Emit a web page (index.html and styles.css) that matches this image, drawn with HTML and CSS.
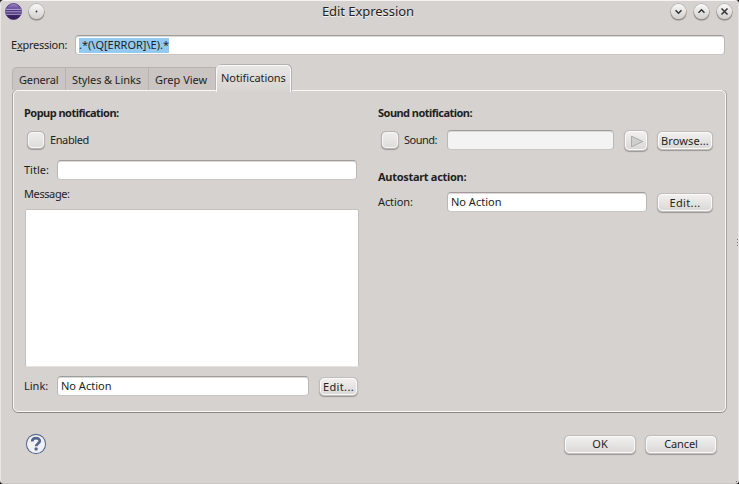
FILE: index.html
```html
<!DOCTYPE html>
<html lang="en">
<head>
<meta charset="utf-8">
<title>Edit Expression</title>
<link rel="stylesheet" href="styles.css">
</head>
<body>
<div class="window">
  <header class="titlebar">
    <svg class="logo" width="17" height="17" viewBox="0 0 16 16">
      <defs><linearGradient id="lg" x1="0" y1="0" x2="0" y2="1"><stop offset="0" stop-color="#a58cc8"/><stop offset=".45" stop-color="#4b3485"/><stop offset="1" stop-color="#2f1950"/></linearGradient></defs>
      <circle cx="8" cy="8" r="7.5" fill="url(#lg)" stroke="#4a3378" stroke-width=".8"/>
      <path d="M1 6h14M.5 8.3h15M1 10.6h14" stroke="#c9bedd" stroke-width=".8"/>
    </svg>
    <span class="round"><svg width="15" height="15" viewBox="0 0 15 15"><circle cx="7.5" cy="7.5" r=".9" fill="#333"/></svg></span>
    <h1 class="caption">Edit Expression</h1>
    <div class="controls">
      <span class="round"><svg width="15" height="15" viewBox="0 0 15 15"><path d="M4.5 6.2l3 3 3-3"/></svg></span>
      <span class="round"><svg width="15" height="15" viewBox="0 0 15 15"><path d="M4.5 8.8l3-3 3 3"/></svg></span>
      <span class="round"><svg width="15" height="15" viewBox="0 0 15 15"><path d="M4.5 4.5l6 6M10.5 4.5l-6 6"/></svg></span>
    </div>
  </header>

  <div class="expression">
    <label class="t-expression">E<u>x</u>pression:</label>
    <div class="field"><span class="selected">.*(\Q[ERROR]\E).*</span></div>
  </div>

  <nav class="tabs">
    <div class="tab general"><span>General</span></div>
    <div class="tab styles"><span>Styles &amp; Links</span></div>
    <div class="tab grep"><span>Grep View</span></div>
    <div class="tab active"><span>Notifications</span></div>
  </nav>

  <main class="panel">
    <section class="popup">
      <h2>Popup notification:</h2>
      <div class="row enabled"><span class="check"></span><label class="t-enabled">Enabled</label></div>
      <div class="row title"><label>Title:</label><div class="field"></div></div>
      <div class="row message"><label class="t-message">Message:</label></div>
      <div class="textarea"></div>
      <div class="row link"><label>Link:</label><div class="field"><span class="t-none">No Action</span></div><button class="small"><span class="t-edit">Edit...</span></button></div>
    </section>
    <section class="sound">
      <h2>Sound notification:</h2>
      <div class="row audio"><span class="check"></span><label class="t-sound">Sound:</label><div class="field disabled"></div>
        <button class="play"><svg width="14" height="13" viewBox="0 0 14 13"><path d="M1.5 1.2v10.6L12.8 6.5z" fill="#cfcfcc" stroke="#aaa" stroke-width="1"/></svg></button>
        <button class="browse"><span class="t-browse">Browse...</span></button></div>
      <h2 class="auto">Autostart action:</h2>
      <div class="row action"><label class="t-action">Action:</label><div class="field"><span class="t-none">No Action</span></div><button><span class="t-edit">Edit...</span></button></div>
    </section>
  </main>

  <footer class="footer">
    <svg class="help" width="22" height="22" viewBox="0 0 22 22"><circle cx="11" cy="11" r="9.6" fill="#f1f1f3" stroke="#5c6f94" stroke-width="1.1"/><path d="M7.2 8.4c0-4.5 7.6-4.3 7.6-.4 0 2.4-3.7 2.6-3.7 5.3" fill="none" stroke="#53668f" stroke-width="2.7"/><rect x="9.6" y="14.6" width="3" height="2.8" rx=".6" fill="#53668f"/></svg>
    <button class="wide"><span class="t-ok">OK</span></button>
    <button class="wide"><span class="t-cancel">Cancel</span></button>
  </footer>
  <i class="grip side"></i>
  <i class="grip corner"></i>
</div>
</body>
</html>
```
FILE: styles.css
```css
* { box-sizing: border-box; }
body { margin: 0; background: #1c1a19; overflow: hidden; }
.window {
  position: relative; width: 739px; height: 484px; overflow: hidden;
  background: #d6d2cf; color: #231f1e;
  border: 1px solid #e9e7e5; border-top-color: #f4f3f2; border-bottom-color: #cbc7c4;
  border-radius: 4px;
  font: 11px/14px "Noto Sans", sans-serif;
}
h1, h2 { margin: 0; font-weight: 400; }
label, span, h1, h2 { white-space: nowrap; }
.titlebar { display: flex; align-items: center; height: 22px; padding: 0 6px 0 5px; margin-top: -1px; }
.titlebar .logo { margin: 0 7px 0 -1px; }
.round {
  display: block; width: 15px; height: 15px; border-radius: 50%;
  background: linear-gradient(#f8f8f7, #d3d0ce);
  box-shadow: 0 0 0 .5px #a5a19e, 0 1px 1px .5px #85817e;
}
.round svg { display: block; fill: none; stroke: #333; stroke-width: 1.5; }
.round circle { stroke: none; }
.caption { flex: 1; text-align: center; font-size: 13px; line-height: 18px; text-shadow: 0 1px 0 #f4f3f2; padding-left: 21px; letter-spacing: -.05px; }
.controls { display: flex; gap: 8px; }
.expression { display: flex; align-items: center; height: 20px; margin: 13px 13px 0 10px; }
.expression label { width: 64px; }
.t-expression { letter-spacing: -.25px; }
.t-enabled { letter-spacing: -.4px; }
.t-message { letter-spacing: -.4px; }
.t-sound { letter-spacing: -.5px; }
.t-action { letter-spacing: -.1px; }
.t-edit { letter-spacing: .35px; }
.t-browse { letter-spacing: .1px; }
.t-cancel { letter-spacing: -.1px; }
.t-ok { letter-spacing: .1px; }
.field {
  flex: 1; height: 20px; background: #fff; border: 1px solid #bbb7b4;
  border-top: 1px solid #9f9c9a; border-bottom-color: #cac6c3; border-radius: 4px;
  box-shadow: inset 0 1px 0 #dcdad9; padding: 2px 3px; line-height: 14px;
}
.field.disabled { background: #f3f3f3; }
.field span { display: block; width: max-content; }
.field .selected { height: 15px; line-height: 14px; background: #94caef; }
.tabs { display: flex; align-items: flex-end; height: 27px; margin: 9px 0 0 11px; }
.tab {
  height: 23px; border: 1px solid #b8b3b0; border-left-width: 0; border-bottom: 0;
  background: #cac5c2; padding: 5px 0 0 6px; margin-bottom: 1px;
}
.tab.general { width: 54px; border-left-width: 1px; border-radius: 5px 0 0; letter-spacing: -.15px; }
.tab.styles { width: 83px; letter-spacing: -.1px; }
.tab.grep { width: 67px; }
.tab.active {
  position: relative; z-index: 1; width: 75px; height: 27px; margin-bottom: -1px;
  background: linear-gradient(#e8e7e6, #d6d2cf); border: 1px solid #fbfafa; border-bottom: 0;
  border-radius: 5px 5px 0 0; box-shadow: 1px -1px 0 #b5b1ae; padding: 5px 0 0 4px; letter-spacing: -.05px;
}
.panel {
  display: flex; width: 713px; height: 322px; margin: -1px 0 0 12px;
  border: 1px solid #f9f8f7; border-radius: 5px;
  box-shadow: -1px 0 0 #a7a3a0, 1px 0 0 #a7a3a0, 0 1px 0 #8b8784;
}
.popup { width: 334px; margin-left: 10px; padding-top: 15px; }
.sound { width: 335px; margin-left: 20px; padding-top: 15px; }
h2 { font-weight: 700; font-size: 11px; line-height: 14px; letter-spacing: -.53px; }
.row { display: flex; align-items: center; height: 20px; }
.check {
  width: 16px; height: 16px; margin-left: 4px; border: 1px solid #f7f6f5; border-radius: 4px;
  background: linear-gradient(#eeedeb, #deddda); box-shadow: 0 0 0 1px #b8b4b1, 0 1px 1px 1px #9b9794;
}
.sound .check { margin-left: 4px; }
.enabled { margin-top: 10px; }
.check + label { margin-left: 6px; }
.title { margin-top: 10px; width: 333px; }
.title label, .link label { width: 33px; }
.message { margin-top: 4px; }
.textarea { height: 158px; margin: 5px 0 0 1px; background: #fff; border: 1px solid #c5c0bd; border-bottom-color: #e5e2e0; border-radius: 2px; width: 334px; }
.link { margin-top: 9px; }
button {
  width: 54px; height: 17px; margin: 1px 1px 0 11px; padding: 0; border: 1px solid #fbfafa; border-radius: 4px;
  color: inherit; font: inherit; line-height: 14px; text-align: center;
  background: linear-gradient(#f1f0ef, #dbd9d7); box-shadow: 0 0 0 1px #c1bdba, 0 1px 1px 1px #9b9794;
}
button.small { width: 37px; }
button.play { width: 22px; height: 19px; margin: 0 0 0 11px; padding-left: 2px; }
button.browse { margin-top: 0; height: 17px; line-height: 13px; }
.play svg { display: block; margin: 2px auto 0; }
.audio { margin-top: 10px; }
.audio .field { flex: none; width: 167px; margin-left: auto; }
.auto { margin-top: 20px; letter-spacing: -.3px; }
.action { margin-top: 8px; }
.action label { width: 69px; }
.footer { display: flex; align-items: center; height: 22px; margin: 21px 22px 0 24px; }
.footer .help { margin-right: auto; }
button.wide { width: 70px; height: 17px; margin: 0 0 0 11px; }
.grip { position: absolute; background: radial-gradient(circle, #777 .7px, transparent 1px) 0 0 / 3px 3px; }
.side { right: -1px; top: 237px; width: 3px; height: 9px; }
.corner { right: -1px; bottom: -1px; width: 7px; height: 7px; clip-path: polygon(100% 0, 100% 100%, 0 100%); }
```
